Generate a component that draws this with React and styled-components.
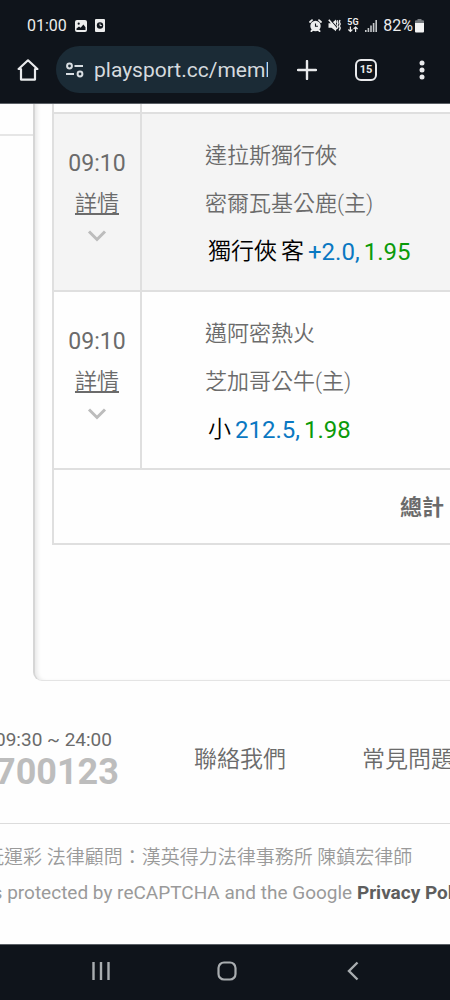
// deps
import { createGlobalStyle, css, styled } from 'styled-components';

const GlobalStyle = createGlobalStyle`
  * {
    box-sizing: border-box;
    margin: 0;
    padding: 0;
  }

  body {
    background-color: #fefefe;
    color: #6b6b6b;
    font-family: Roboto, 'Noto Sans CJK TC', sans-serif;
    overflow-x: hidden;
  }

  a {
    color: inherit;
    text-decoration: none;
  }
`;

const flexCenter = css`
  display: flex;
  align-items: center;
  justify-content: center;
`;

const light = css`
  font-weight: 350;
`;

const line = '#dfdfdf';

const Screen = styled.div`
  display: flex;
  flex-direction: column;
  min-height: 100vh;
  overflow: hidden;
`;

/* status bar */
const StatusBar = styled.header`
  display: flex;
  align-items: center;
  justify-content: space-between;
  height: 46px;
  padding: 5px 26px 0 27px;
  background-color: #0f141b;
  color: #eceded;
  font-size: 16px;
  line-height: 20px;
`;

const StatusGroup = styled.div`
  display: flex;
  align-items: center;
  gap: ${({ $gap }) => $gap}px;
`;

const StatusIcon = styled.svg`
  display: block;
  flex: none;
`;

/* browser bar */
const BrowserBar = styled.nav`
  display: flex;
  align-items: flex-start;
  height: 58px;
  padding-right: 2px;
  background-color: #0f141b;
  border-bottom: 1px solid #5b6066;
`;

const BarButton = styled.button`
  ${flexCenter}
  flex: none;
  width: ${({ $width }) => $width}px;
  height: 47px;
  border: 0;
  background: none;
  color: #e9eaec;
`;

const AddressBar = styled.label`
  display: flex;
  flex: 1;
  align-items: center;
  gap: 9px;
  min-width: 0;
  height: 47px;
  padding: 0 9px;
  border-radius: 24px;
  background-color: #1b2b36;
  color: #d9dee2;
`;

const AddressInput = styled.input`
  flex: 1;
  min-width: 0;
  border: 0;
  outline: 0;
  background: none;
  color: #d5dade;
  font-family: inherit;
  font-size: 21px;
  line-height: 28px;
`;

const TabCount = styled.span`
  ${flexCenter}
  width: 22px;
  height: 22px;
  border: 2px solid #e9eaec;
  border-radius: 6px;
  font-family: Roboto, sans-serif;
  font-size: 11px;
  font-weight: 700;
`;

/* record list */
const Content = styled.main`
  flex: 1;
`;

const Board = styled.div`
  display: flex;
  height: 577px;
`;

const SideColumn = styled.div`
  width: 33px;
  height: 32px;
  border-bottom: 2px solid #e6e6e6;
`;

const Card = styled.section`
  flex: 1;
  min-width: 0;
  padding-left: 17px;
  border-left: 2px solid #d6d6d6;
  border-bottom: 1px solid #e4e4e4;
  border-bottom-left-radius: 9px;
  box-shadow: inset 4px 0 4px -2px #e6e6e6;
  overflow: hidden;
`;

const RecordTable = styled.table`
  width: 100%;
  border-collapse: collapse;
  border-left: 2px solid ${line};
  border-bottom: 2px solid ${line};
`;

const RecordRow = styled.tr`
  height: ${({ $height }) => $height}px;
  border-bottom: 2px solid ${line};
  background-color: ${({ $shaded }) => ($shaded ? '#f4f4f4' : '#fefefe')};
`;

const TimeCell = styled.td`
  width: 88px;
  border-right: 2px solid ${line};
  text-align: center;
  vertical-align: middle;
`;

const Time = styled.p`
  font-size: 23px;
  line-height: 40px;
`;

const DetailLink = styled.a`
  ${light}
  display: block;
  font-size: 22px;
  line-height: 40px;
  text-decoration: underline;
  text-decoration-thickness: 2px;
  text-underline-offset: 2px;
`;

const Chevron = styled.svg`
  display: block;
  margin: 6px auto 18px;
`;

const MatchCell = styled.td`
  padding: 4px 0 0 63px;
  white-space: nowrap;
`;

const Team = styled.p`
  ${light}
  font-size: 22px;
  line-height: 48px;
`;

const Bet = styled.p`
  display: flex;
  gap: 4px;
  padding-left: 3px;
  color: #000;
  font-size: 23px;
  line-height: 48px;
`;

const Pick = styled.span`
  ${light}
`;

const Figure = styled.span`
  color: ${({ $color }) => $color};
  font-size: 24px;
`;

const TotalCell = styled.td`
  padding: 0 6px 4px 0;
  font-size: 22px;
  font-weight: 700;
  text-align: right;
`;

/* footer */
const FooterTop = styled.div`
  display: flex;
  align-items: center;
  padding: 47px 0 31px;
  border-bottom: 1px solid #dcdcdc;
  white-space: nowrap;
`;

const Service = styled.div`
  flex: none;
  width: 199px;
  margin-left: -5px;
`;

const ServiceHours = styled.p`
  font-size: 19px;
  line-height: 24px;
`;

const ServicePhone = styled.p`
  color: #bdbdbd;
  font-size: 36px;
  font-weight: 700;
  line-height: 40px;
`;

const FooterLinks = styled.div`
  ${light}
  display: flex;
  flex: none;
  gap: 76px;
  font-size: 23px;
  line-height: 32px;
`;

const Legal = styled.div`
  padding: 16px 0 32px;
  color: #9a9a9a;
  font-size: 19px;
  white-space: nowrap;
`;

const Counsel = styled.p`
  ${light}
  margin-left: -15px;
  line-height: 36px;
`;

const Captcha = styled.p`
  margin-left: -12px;
  line-height: 34px;

  a {
    color: #5e5e5e;
    font-weight: 700;
  }
`;

/* system buttons */
const SystemNav = styled.nav`
  display: flex;
  justify-content: space-between;
  align-items: center;
  height: 56px;
  padding: 0 73px 3px 77px;
  border-top: 1px solid #5b6066;
  background-color: #0f141b;
`;

const SystemButton = styled.button`
  ${flexCenter}
  width: 48px;
  height: 48px;
  border: 0;
  background: none;
  color: #a9adb0;
`;

const records = [
  {
    time: '09:10',
    teams: ['達拉斯獨行俠', '密爾瓦基公鹿(主)'],
    pick: ['獨行俠', '客'],
    line: '+2.0,',
    odds: '1.95',
    shaded: true,
  },
  {
    time: '09:10',
    teams: ['邁阿密熱火', '芝加哥公牛(主)'],
    pick: ['小'],
    line: '212.5,',
    odds: '1.98',
    shaded: false,
  },
];

function PhoneStatus() {
  return (
    <StatusBar>
      <StatusGroup $gap={8}>
        <span>01:00</span>
        <StatusIcon width="12" height="12" viewBox="0 0 12 12">
          <rect width="12" height="12" rx="2" fill="#eceded" />
          <circle cx="3.7" cy="3.7" r="1.1" fill="#0f141b" />
          <path d="M1.5 10V8.6L4 6.6l1.6 1.2L8.4 4.6l2.1 2.6V10z" fill="#0f141b" />
        </StatusIcon>
        <StatusIcon width="10" height="13" viewBox="0 0 10 13">
          <rect width="10" height="13" rx="1" fill="#eceded" />
          <circle cx="5" cy="6.5" r="3.2" fill="#0f141b" />
          <path d="M5 4.6v2h1.8" fill="none" stroke="#eceded" strokeWidth="1" />
        </StatusIcon>
      </StatusGroup>

      <StatusGroup $gap={6}>
        <StatusIcon width="13" height="13" viewBox="0 0 13 13">
          <circle cx="6.5" cy="7" r="5.2" fill="#eceded" />
          <path
            d="M1 3 3 1.2M12 3 10 1.2M2.4 12.2l1.2-1.2M10.6 12.2l-1.2-1.2"
            stroke="#eceded"
            strokeWidth="1.8"
            strokeLinecap="round"
          />
          <path d="M6.5 4.4v2.8h2.4" fill="none" stroke="#0f141b" strokeWidth="1.1" />
        </StatusIcon>
        <StatusIcon width="13" height="13" viewBox="0 0 13 13" fill="none">
          <path d="M.5 4.2h3L8 .6v11.6L3.5 8.8h-3z" fill="#eceded" />
          <path d="M2 .6l8 9" stroke="#0f141b" strokeWidth="1.2" />
          <path d="M.8.8l8 9.4" stroke="#eceded" strokeWidth="1.6" />
          <path
            d="M9.6 1.2l-.6 1.7.9 1.7-.9 1.7.9 1.7-.9 1.7M12 1l-.7 2 .9 2-.9 2 .9 2-.9 2.5"
            stroke="#eceded"
            strokeWidth="1.4"
          />
        </StatusIcon>
        <StatusIcon width="12" height="15" viewBox="0 0 12 15">
          <text x="6" y="7" fill="#eceded" fontFamily="Roboto" fontSize="9" fontWeight="700" textAnchor="middle">
            5G
          </text>
          <path
            d="M3.4 8.5v5M1.4 11.5l2 2 2-2M8.6 14v-5M6.6 11l2-2 2 2"
            fill="none"
            stroke="#eceded"
            strokeWidth="1.2"
          />
        </StatusIcon>
        <StatusIcon width="12" height="12" viewBox="0 0 12 12" fill="#c5c8ca">
          <rect y="10" width="1.6" height="2" />
          <rect x="2.6" y="8" width="1.6" height="4" />
          <rect x="5.2" y="5.5" width="1.6" height="6.5" />
          <rect x="7.8" y="3" width="1.6" height="9" />
          <rect x="10.4" width="1.6" height="12" />
        </StatusIcon>
        <StatusGroup $gap={2}>
          <span>82%</span>
          <StatusIcon width="9" height="14" viewBox="0 0 9 14">
            <path d="M2.5 0h4v1.3H8q1 0 1 1V5H0V2.3q0-1 1-1h1.5z" fill="#777b80" />
            <path d="M0 4h9v8.5q0 1-1 1H1q-1 0-1-1z" fill="#f4f4f4" />
          </StatusIcon>
        </StatusGroup>
      </StatusGroup>
    </StatusBar>
  );
}

function Browser() {
  return (
    <BrowserBar>
      <BarButton type="button" aria-label="Home" $width={56}>
        <svg width="22" height="22" viewBox="0 0 22 22" fill="none">
          <path
            d="M4 10H1.6L11 1.3l9.4 8.7H18v10.6H4z"
            stroke="currentColor"
            strokeWidth="2.2"
            strokeLinejoin="round"
          />
        </svg>
      </BarButton>
      <AddressBar>
        <svg width="20" height="16" viewBox="0 0 20 16" fill="none" stroke="currentColor" strokeWidth="2">
          <circle cx="4.5" cy="4" r="2.4" />
          <path d="M9.5 4H18M1 12h8" />
          <circle cx="15" cy="12" r="2.4" />
        </svg>
        <AddressInput type="text" aria-label="Address" defaultValue="playsport.cc/member" />
      </AddressBar>
      <BarButton type="button" aria-label="New tab" $width={60}>
        <svg width="20" height="20" viewBox="0 0 20 20">
          <path d="M10 1v18M1 10h18" stroke="currentColor" strokeWidth="2.4" strokeLinecap="round" />
        </svg>
      </BarButton>
      <BarButton type="button" aria-label="Tabs" $width={58}>
        <TabCount>15</TabCount>
      </BarButton>
      <BarButton type="button" aria-label="Menu" $width={53}>
        <svg width="6" height="20" viewBox="0 0 6 20" fill="currentColor">
          <circle cx="3" cy="3" r="2.5" />
          <circle cx="3" cy="10" r="2.5" />
          <circle cx="3" cy="17" r="2.5" />
        </svg>
      </BarButton>
    </BrowserBar>
  );
}

function Record({ record }) {
  return (
    <RecordRow $height={178} $shaded={record.shaded}>
      <TimeCell>
        <Time>{record.time}</Time>
        <DetailLink href="#detail">詳情</DetailLink>
        <Chevron width="20" height="12" viewBox="0 0 20 12" fill="none">
          <path d="M2 1.5l8 8 8-8" stroke="#bcbcbc" strokeWidth="3" />
        </Chevron>
      </TimeCell>
      <MatchCell>
        {record.teams.map((team) => (
          <Team key={team}>{team}</Team>
        ))}
        <Bet>
          {record.pick.map((word) => (
            <Pick key={word}>{word}</Pick>
          ))}
          <Figure $color="#0a78c2">{record.line}</Figure>
          <Figure $color="#0a9a0a">{record.odds}</Figure>
        </Bet>
      </MatchCell>
    </RecordRow>
  );
}

function Footer() {
  return (
    <footer>
      <FooterTop>
        <Service>
          <ServiceHours>09:30 ~ 24:00</ServiceHours>
          <ServicePhone>700123</ServicePhone>
        </Service>
        <FooterLinks>
          <a href="#contact">聯絡我們</a>
          <a href="#faq">常見問題</a>
        </FooterLinks>
      </FooterTop>
      <Legal>
        <Counsel>玩運彩 法律顧問：漢英得力法律事務所 陳鎮宏律師</Counsel>
        <Captcha>
          is protected by reCAPTCHA and the Google <a href="#privacy">Privacy Policy</a>
        </Captcha>
      </Legal>
    </footer>
  );
}

function App() {
  return (
    <Screen>
      <GlobalStyle />
      <PhoneStatus />
      <Browser />

      <Content>
        <Board>
          <SideColumn />
          <Card>
            <RecordTable>
              <tbody>
                <RecordRow $height={9}>
                  <TimeCell />
                  <MatchCell />
                </RecordRow>
                {records.map((record) => (
                  <Record record={record} key={record.line} />
                ))}
                <RecordRow $height={75}>
                  <TotalCell colSpan="2">總計</TotalCell>
                </RecordRow>
              </tbody>
            </RecordTable>
          </Card>
        </Board>
        <Footer />
      </Content>

      <SystemNav>
        <SystemButton type="button" aria-label="Recent apps">
          <svg width="20" height="20" viewBox="0 0 20 20">
            <path d="M2.5 1v18M10 1v18M17.5 1v18" stroke="currentColor" strokeWidth="2.4" />
          </svg>
        </SystemButton>
        <SystemButton type="button" aria-label="Home screen">
          <svg width="20" height="20" viewBox="0 0 20 20" fill="none">
            <rect x="1.5" y="1.5" width="17" height="17" rx="5.5" stroke="currentColor" strokeWidth="2.2" />
          </svg>
        </SystemButton>
        <SystemButton type="button" aria-label="Back">
          <svg width="12" height="20" viewBox="0 0 12 20" fill="none">
            <path d="M10.5 1.5L2 10l8.5 8.5" stroke="currentColor" strokeWidth="2.4" />
          </svg>
        </SystemButton>
      </SystemNav>
    </Screen>
  );
}

export default App;
